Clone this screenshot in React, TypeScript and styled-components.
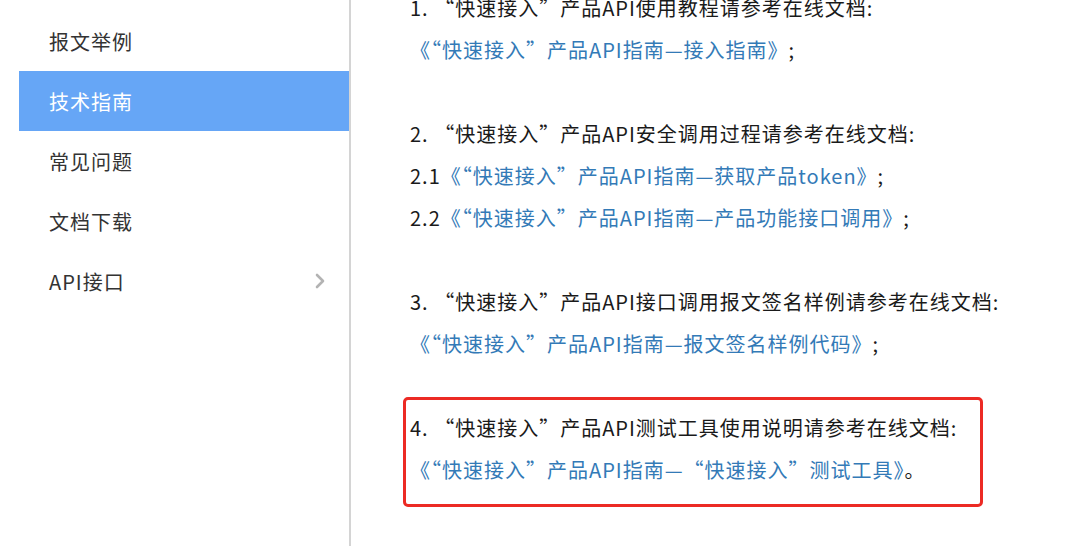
import React from 'react'
import styled, { createGlobalStyle } from 'styled-components'

const GlobalStyle = createGlobalStyle`
  html, body, #root {
    height: 100%;
  }
  body {
    margin: 0;
    overflow: hidden;
    background: #fff;
    font-family: 'Noto Sans CJK SC', 'Noto Sans', sans-serif;
  }
`

const menu = [
  { label: '报文举例' },
  { label: '技术指南', active: true },
  { label: '常见问题' },
  { label: '文档下载' },
  { label: 'API接口', arrow: true },
]

type Line = { prefix?: string; link?: string; suffix?: string; text?: string }

const sections: Array<{ lines: Array<Line>; marked?: boolean }> = [
  {
    lines: [
      { text: '1. “快速接入”产品API使用教程请参考在线文档:' },
      { link: '《“快速接入”产品API指南—接入指南》', suffix: ';' },
    ],
  },
  {
    lines: [
      { text: '2. “快速接入”产品API安全调用过程请参考在线文档:' },
      { prefix: '2.1', link: '《“快速接入”产品API指南—获取产品token》', suffix: ';' },
      { prefix: '2.2', link: '《“快速接入”产品API指南—产品功能接口调用》', suffix: ';' },
    ],
  },
  {
    lines: [
      { text: '3. “快速接入”产品API接口调用报文签名样例请参考在线文档:' },
      { link: '《“快速接入”产品API指南—报文签名样例代码》', suffix: ';' },
    ],
  },
  {
    marked: true,
    lines: [
      { text: '4. “快速接入”产品API测试工具使用说明请参考在线文档:' },
      { link: '《“快速接入”产品API指南—“快速接入”测试工具》', suffix: '。' },
    ],
  },
]

const Chevron = () => (
  <svg width="10" height="16" viewBox="0 0 10 16" fill="none">
    <polyline
      points="2,2 8,8 2,14"
      stroke="#b3b3b3"
      strokeWidth="2.6"
      strokeLinecap="round"
      strokeLinejoin="round"
    />
  </svg>
)

const App: React.FC = () => (
  <>
    <GlobalStyle />
    <Page>
      <Sidebar>
        {menu.map(({ label, active, arrow }) => (
          <MenuItem key={label} $active={!!active}>
            <span>{label}</span>
            {arrow && <Chevron />}
          </MenuItem>
        ))}
      </Sidebar>
      <Content>
        {sections.map(({ lines, marked }, i) => (
          <Section key={i} $marked={!!marked}>
            {lines.map((line, j) => (
              <Paragraph key={j}>
                {line.text}
                {line.prefix}
                {line.link && <DocLink href="#">{line.link}</DocLink>}
                {line.suffix}
              </Paragraph>
            ))}
          </Section>
        ))}
      </Content>
    </Page>
  </>
)

const Page = styled.div`
  display: flex;
  height: 100%;
`

const Sidebar = styled.nav`
  width: 330px;
  margin-left: 19px;
  padding-top: 11px;
  border-right: 2px solid #d4d4d4;
  flex-shrink: 0;
`

const MenuItem = styled.div<{ $active: boolean }>`
  display: flex;
  align-items: center;
  justify-content: space-between;
  height: 60px;
  padding: 0 24px 0 30px;
  font-size: 20px;
  letter-spacing: 1px;
  color: ${(p) => (p.$active ? '#fff' : '#333')};
  background: ${(p) => (p.$active ? '#66a6f6' : 'transparent')};
  cursor: pointer;
`

const Content = styled.main`
  flex: 1;
  padding-left: 59px;
  margin-top: -13px;
  display: flex;
  flex-direction: column;
  gap: 42px;
`

const Section = styled.section<{ $marked: boolean }>`
  position: relative;
  &::before {
    content: '';
    display: ${(p) => (p.$marked ? 'block' : 'none')};
    position: absolute;
    top: -10px;
    bottom: -16px;
    left: -7px;
    width: 574px;
    border: 3px solid #ec2a24;
    border-radius: 5px;
    pointer-events: none;
  }
`

const Paragraph = styled.p`
  margin: 0;
  font-size: 20px;
  line-height: 42px;
  letter-spacing: 1px;
  color: #1a1a1a;
  white-space: nowrap;
`

const DocLink = styled.a`
  color: #337ab7;
  text-decoration: none;
`

export default App
